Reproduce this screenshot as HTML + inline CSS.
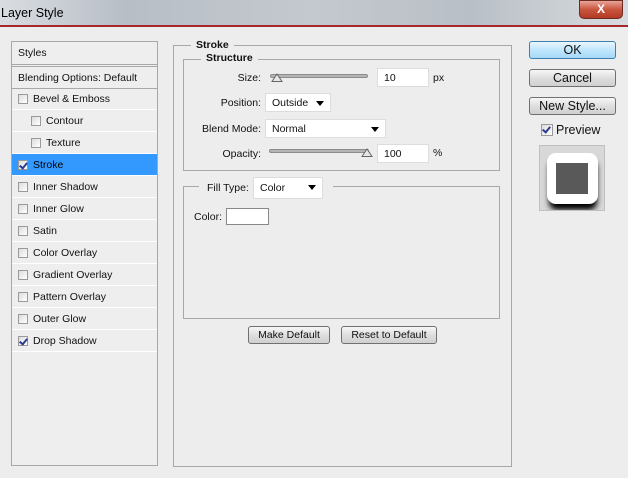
<!DOCTYPE html>
<html><head><style>
*{margin:0;padding:0;box-sizing:border-box}
body{width:628px;height:478px;background:#ededed;font-family:"Liberation Sans",sans-serif;font-size:10.5px;color:#111;position:relative;overflow:hidden}
.a{position:absolute}
.title{left:0;top:0;width:628px;height:27px;background:linear-gradient(90deg,#d9dde2 0%,#b8bec6 20%,#c4c9cf 50%,#b9bfc6 75%,#d8dce0 100%);border-bottom:2px solid #a5282c}
.title span{position:absolute;left:1px;top:6px;font-size:12.5px;color:#000}
.close{left:579px;top:0;width:44px;height:19px;border-radius:0 0 5px 5px;background:linear-gradient(#e8a598,#c9553f 50%,#b33a25);border:1px solid #6d2b22;color:#fff;font-weight:bold;font-size:12px;text-align:center;line-height:17px}
.lp{left:11px;top:41px;width:147px;height:425px;border:1px solid #a8a8a8;background:#eeeeee}
.row{position:absolute;left:0;width:145px;height:22px;line-height:22px;border-bottom:1px solid #fff}
.cb{position:absolute;width:10px;height:10px;border:1px solid #9a9a9a;background:linear-gradient(135deg,#dcdcdc,#fff)}
.ck::after{content:"";position:absolute;left:2px;top:0px;width:3px;height:6px;border-right:2px solid #2a3c8c;border-bottom:2px solid #2a3c8c;transform:rotate(40deg)}
.grp{border:1px solid #a8a8a8}
.lbl{position:absolute;background:#ededed;padding:0 5px;font-weight:bold}
.inp{position:absolute;background:#fff;border:1px solid #ddd;height:19px;line-height:18px;padding-left:6px}
.sel::after{content:"";position:absolute;right:6px;top:7px;border-left:4px solid transparent;border-right:4px solid transparent;border-top:5px solid #000}
.track{position:absolute;height:4px;border-radius:2px;background:#b5b5b5;border:1px solid #8c8c8c}
.btn{position:absolute;border:1px solid #707070;border-radius:3px;background:linear-gradient(#f6f6f6,#dedede 50%,#d0d0d0);text-align:center;font-size:12.5px}
.r{position:absolute;text-align:right}
</style></head><body>
<div class="a title"><span>Layer Style</span></div>
<div class="a close">X</div>

<div class="a lp">
 <div class="row" style="top:0;padding-left:6px;border-bottom:3px double #a8a8a8;height:25px">Styles</div>
 <div class="row" style="top:25px;padding-left:6px;border-bottom:1px solid #a8a8a8">Blending Options: Default</div>
 <div class="row" style="top:46px"><div class="cb" style="left:6px;top:6px"></div><span style="position:absolute;left:21px">Bevel &amp; Emboss</span></div>
 <div class="row" style="top:68px"><div class="cb" style="left:19px;top:6px"></div><span style="position:absolute;left:34px">Contour</span></div>
 <div class="row" style="top:90px"><div class="cb" style="left:19px;top:6px"></div><span style="position:absolute;left:34px">Texture</span></div>
 <div class="row" style="top:112px;background:#3399ff;color:#fff"><div class="cb ck" style="left:6px;top:6px"></div><span style="position:absolute;left:21px;color:#000">Stroke</span></div>
 <div class="row" style="top:134px"><div class="cb" style="left:6px;top:6px"></div><span style="position:absolute;left:21px">Inner Shadow</span></div>
 <div class="row" style="top:156px"><div class="cb" style="left:6px;top:6px"></div><span style="position:absolute;left:21px">Inner Glow</span></div>
 <div class="row" style="top:178px"><div class="cb" style="left:6px;top:6px"></div><span style="position:absolute;left:21px">Satin</span></div>
 <div class="row" style="top:200px"><div class="cb" style="left:6px;top:6px"></div><span style="position:absolute;left:21px">Color Overlay</span></div>
 <div class="row" style="top:222px"><div class="cb" style="left:6px;top:6px"></div><span style="position:absolute;left:21px">Gradient Overlay</span></div>
 <div class="row" style="top:244px"><div class="cb" style="left:6px;top:6px"></div><span style="position:absolute;left:21px">Pattern Overlay</span></div>
 <div class="row" style="top:266px"><div class="cb" style="left:6px;top:6px"></div><span style="position:absolute;left:21px">Outer Glow</span></div>
 <div class="row" style="top:288px"><div class="cb ck" style="left:6px;top:6px"></div><span style="position:absolute;left:21px">Drop Shadow</span></div>
</div>

<div class="a grp" style="left:173px;top:45px;width:339px;height:422px"></div>
<div class="lbl" style="left:191px;top:39px">Stroke</div>
<div class="a grp" style="left:183px;top:59px;width:317px;height:112px"></div>
<div class="lbl" style="left:201px;top:52px">Structure</div>

<div class="r" style="left:200px;top:72px;width:61px">Size:</div>
<div class="track" style="left:270px;top:74px;width:98px"></div>
<svg class="a" style="left:271px;top:73px" width="12" height="9"><path d="M1 8.5 L6 1 L11 8.5 Z" fill="#e8e8e8" stroke="#666"/></svg>
<div class="inp" style="left:377px;top:68px;width:52px">10</div>
<div class="a" style="left:433px;top:72px">px</div>

<div class="r" style="left:200px;top:97px;width:61px">Position:</div>
<div class="inp sel" style="left:265px;top:93px;width:66px">Outside</div>

<div class="r" style="left:190px;top:123px;width:71px">Blend Mode:</div>
<div class="inp sel" style="left:265px;top:119px;width:121px">Normal</div>

<div class="r" style="left:200px;top:148px;width:61px">Opacity:</div>
<div class="track" style="left:269px;top:149px;width:100px"></div>
<svg class="a" style="left:361px;top:148px" width="12" height="9"><path d="M1 8.5 L6 1 L11 8.5 Z" fill="#e8e8e8" stroke="#666"/></svg>
<div class="inp" style="left:377px;top:144px;width:52px">100</div>
<div class="a" style="left:433px;top:147px">%</div>

<div class="a grp" style="left:183px;top:186px;width:317px;height:133px"></div>
<div class="a" style="left:199px;top:178px;width:54px;height:20px;background:#ededed"></div>
<div class="a" style="left:321px;top:178px;width:12px;height:20px;background:#ededed"></div>
<div class="a" style="left:207px;top:182px">Fill Type:</div>
<div class="inp sel" style="left:253px;top:177px;width:70px;height:22px;line-height:21px">Color</div>
<div class="a" style="left:194px;top:211px">Color:</div>
<div class="a" style="left:226px;top:208px;width:43px;height:17px;background:#fff;border:1px solid #888"></div>

<div class="btn" style="left:248px;top:326px;width:82px;height:18px;font-size:10.5px;line-height:16px">Make Default</div>
<div class="btn" style="left:341px;top:326px;width:96px;height:18px;font-size:10.5px;line-height:16px">Reset to Default</div>

<div class="btn" style="left:529px;top:41px;width:87px;height:18px;line-height:16px;border-color:#3c7fb1;background:linear-gradient(#eaf6fd,#bee6fd 50%,#a7d9f5)">OK</div>
<div class="btn" style="left:529px;top:69px;width:87px;height:18px;line-height:16px">Cancel</div>
<div class="btn" style="left:529px;top:97px;width:87px;height:18px;line-height:16px">New Style...</div>
<div class="cb ck" style="left:541px;top:124px;width:12px;height:12px"></div>
<div class="a" style="left:556px;top:123px;font-size:12.5px">Preview</div>
<div class="a" style="left:539px;top:145px;width:66px;height:66px;background:#d8d8d8;border:1px solid #c0c0c0;overflow:hidden">
 <div class="a" style="left:9px;top:14px;width:48px;height:50px;background:#000;border-radius:8px;filter:blur(3px)"></div>
 <div class="a" style="left:7px;top:7px;width:51px;height:51px;background:#fff;border-radius:9px"></div>
 <div class="a" style="left:16px;top:17px;width:32px;height:31px;background:#595959"></div>
</div>
</body></html>
